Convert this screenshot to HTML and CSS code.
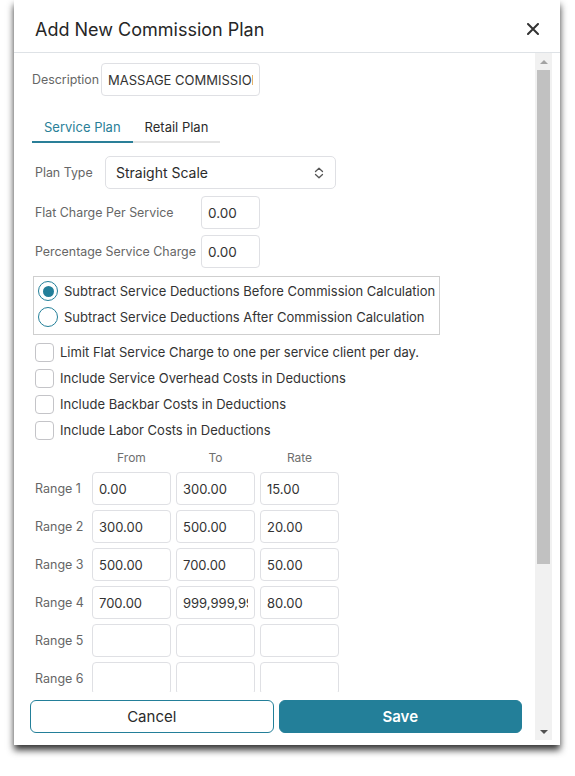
FILE: index.html
```html
<!DOCTYPE html>
<html lang="en">
<head>
<meta charset="utf-8">
<title>Add New Commission Plan</title>
<link rel="stylesheet" href="styles.css">
</head>
<body>
<div class="modal">
  <div class="modal-header">
    <h2 class="title">Add New Commission Plan</h2>
    <button class="close" aria-label="Close">
      <svg width="12" height="12" viewBox="0 0 12 12"><path d="M1 1L11 11M11 1L1 11" stroke="#333" stroke-width="2" stroke-linecap="round"/></svg>
    </button>
  </div>
  <div class="modal-body">
    <div class="main">
      <div class="content">
        <div class="desc-row">
          <label class="lbl desc-lbl">Description</label>
          <input class="field desc" type="text" value="MASSAGE COMMISSION" readonly>
        </div>
        <div class="tabs">
          <div class="tab active">Service Plan</div>
          <div class="tab">Retail Plan</div>
        </div>
        <div class="plan">
          <div class="row">
            <label class="lbl plan-lbl">Plan Type</label>
            <div class="select">
              <span>Straight Scale</span>
              <svg width="10" height="12" viewBox="0 0 10 12"><path d="M1.5 4.5L5 1.2L8.5 4.5M1.5 7.5L5 10.8L8.5 7.5" fill="none" stroke="#555" stroke-width="1.3" stroke-linecap="round" stroke-linejoin="round"/></svg>
            </div>
          </div>
          <div class="row row-flat">
            <label class="lbl wide-lbl">Flat Charge Per Service</label>
            <input class="field small" type="text" value="0.00" readonly>
          </div>
          <div class="row row-perc">
            <label class="lbl wide-lbl">Percentage Service Charge</label>
            <input class="field small" type="text" value="0.00" readonly>
          </div>
        </div>
        <div class="radio-box">
          <div class="opt"><span class="radio checked"></span><span class="opt-text">Subtract Service Deductions Before Commission Calculation</span></div>
          <div class="opt"><span class="radio"></span><span class="opt-text">Subtract Service Deductions After Commission Calculation</span></div>
        </div>
        <div class="checks">
          <div class="opt"><span class="check"></span><span class="opt-text">Limit Flat Service Charge to one per service client per day.</span></div>
          <div class="opt"><span class="check"></span><span class="opt-text">Include Service Overhead Costs in Deductions</span></div>
          <div class="opt"><span class="check"></span><span class="opt-text">Include Backbar Costs in Deductions</span></div>
          <div class="opt"><span class="check"></span><span class="opt-text">Include Labor Costs in Deductions</span></div>
        </div>
        <div class="ranges">
          <span></span><span class="col-h">From</span><span class="col-h">To</span><span class="col-h">Rate</span>
          <span class="lbl range-lbl">Range 1</span><input class="field cell" value="0.00" readonly><input class="field cell" value="300.00" readonly><input class="field cell" value="15.00" readonly>
          <span class="lbl range-lbl">Range 2</span><input class="field cell" value="300.00" readonly><input class="field cell" value="500.00" readonly><input class="field cell" value="20.00" readonly>
          <span class="lbl range-lbl">Range 3</span><input class="field cell" value="500.00" readonly><input class="field cell" value="700.00" readonly><input class="field cell" value="50.00" readonly>
          <span class="lbl range-lbl">Range 4</span><input class="field cell" value="700.00" readonly><input class="field cell" value="999,999,999.00" readonly><input class="field cell" value="80.00" readonly>
          <span class="lbl range-lbl">Range 5</span><input class="field cell" value="" readonly><input class="field cell" value="" readonly><input class="field cell" value="" readonly>
          <span class="lbl range-lbl">Range 6</span><input class="field cell" value="" readonly><input class="field cell" value="" readonly><input class="field cell" value="" readonly>
        </div>
      </div>
      <div class="footer">
        <button class="btn cancel">Cancel</button>
        <button class="btn save">Save</button>
      </div>
    </div>
    <div class="scrollbar">
      <div class="sb-btn"><span class="arrow-up"></span></div>
      <div class="sb-track"><div class="sb-thumb"></div></div>
      <div class="sb-btn"><span class="arrow-down"></span></div>
    </div>
  </div>
</div>
</body>
</html>
```
FILE: styles.css
```css
* { box-sizing: border-box; }
html, body { margin: 0; padding: 0; background: #fff; }
body { font-family: Inter, "Noto Sans", sans-serif; color: #333; min-height: 776px; }

.modal {
  margin-left: 14px;
  width: 546px;
  height: 745px;
  background: #fff;
  box-shadow: 0 5px 7px rgba(0,0,0,0.8);
  display: flex;
  flex-direction: column;
}

.modal-header {
  height: 53px;
  flex: none;
  border-bottom: 1px solid #dee2e6;
  display: flex;
  align-items: center;
  justify-content: space-between;
  padding: 6px 21px 0 21px;
}
.title { margin: 0; font-size: 18px; font-weight: 400; color: #262626; letter-spacing: 0; }
.close { border: 0; background: none; padding: 0; width: 12px; height: 12px; display: flex; cursor: pointer; }

.modal-body { flex: 1; display: flex; min-height: 0; }

.main { flex: 1; display: flex; flex-direction: column; min-width: 0; }
.content { flex: 1; min-height: 0; overflow: hidden; padding: 10px 0 0 18px; }

.lbl { font-size: 12.4px; color: #666; white-space: nowrap; }

.field {
  font-family: Inter, "Noto Sans", sans-serif;
  font-size: 13px;
  color: #333;
  height: 33px;
  border: 1px solid #dfe0e4;
  border-radius: 4px;
  padding: 0 6px;
  background: #fff;
  outline: none;
  margin: 0;
}

.desc-row { display: flex; align-items: center; height: 33px; }
.desc-lbl { width: 69px; }
.desc { width: 159px; text-transform: uppercase; }

.tabs { display: flex; width: fit-content; margin-top: 14px; }
.tab {
  font-size: 13px;
  line-height: 17px;
  padding: 9px 12px 5px;
  border-bottom: 2px solid #e4e4e4;
  color: #2b2b2b;
}
.tab.active { color: #2a7f98; border-bottom-color: #2a7f98; }

.plan { padding-left: 3px; margin-top: 13px; }
.row { display: flex; align-items: center; }
.plan-lbl { width: 70px; }
.wide-lbl { width: 166px; }
.row-flat { margin-top: 7px; }
.row-perc { margin-top: 6px; }
.small { width: 59px; font-size: 13.5px; }

.select {
  width: 231px;
  height: 33px;
  border: 1px solid #dfe0e4;
  border-radius: 5px;
  display: flex;
  align-items: center;
  justify-content: space-between;
  padding: 0 11px 0 10px;
  font-size: 14px;
  color: #2b2b2b;
}

.radio-box {
  margin: 8px 0 0 1px;
  width: fit-content;
  border: 1px solid #cfcfcf;
  padding: 1px 4px 4px 4px;
}
.opt { display: flex; align-items: center; height: 26px; gap: 6px; }
.opt-text { font-size: 13px; color: #333; white-space: nowrap; }
.radio {
  width: 20px; height: 20px;
  border-radius: 50%;
  border: 1.5px solid #237f99;
  display: flex; align-items: center; justify-content: center;
  flex: none;
}
.radio.checked::after {
  content: "";
  width: 11px; height: 11px;
  border-radius: 50%;
  background: #237f99;
}

.checks { margin: 4px 0 0 3px; }
.check {
  width: 19px; height: 19px;
  border: 1px solid #c4c4c8;
  border-radius: 4px;
  flex: none;
}

.ranges {
  margin: 4px 0 0 3px;
  display: grid;
  grid-template-columns: 52px 79px 79px 79px;
  grid-auto-rows: 33px;
  grid-template-rows: 20px;
  column-gap: 5px;
  row-gap: 5px;
  align-items: center;
}
.col-h { font-size: 12px; color: #6f6f6f; text-align: center; }
.range-lbl { font-size: 12.5px; }
.cell { width: 79px; }

.footer {
  flex: none;
  display: flex;
  gap: 5px;
  padding: 8px 13px 12px 16px;
  background: #fff;
}
.btn {
  flex: 1;
  height: 33px;
  border-radius: 6px;
  font-family: Inter, "Noto Sans", sans-serif;
  font-size: 15px;
  cursor: pointer;
}
.cancel { background: #fff; border: 1px solid #237f99; color: #2b2b2b; }
.save { background: #237f99; border: 1px solid #237f99; color: #fff; font-weight: 600; }

.scrollbar {
  width: 17px;
  margin: 0 8px 5px 0;
  background: #f1f1f1;
  display: flex;
  flex-direction: column;
}
.sb-btn { height: 17px; flex: none; display: flex; align-items: center; justify-content: center; }
.sb-track { flex: 1; padding: 0 2px; }
.sb-thumb { height: 494px; background: #c1c1c1; }
.arrow-up { width: 0; height: 0; border-left: 4px solid transparent; border-right: 4px solid transparent; border-bottom: 4px solid #a3a3a3; }
.arrow-down { width: 0; height: 0; border-left: 4px solid transparent; border-right: 4px solid transparent; border-top: 4px solid #505050; }
```
